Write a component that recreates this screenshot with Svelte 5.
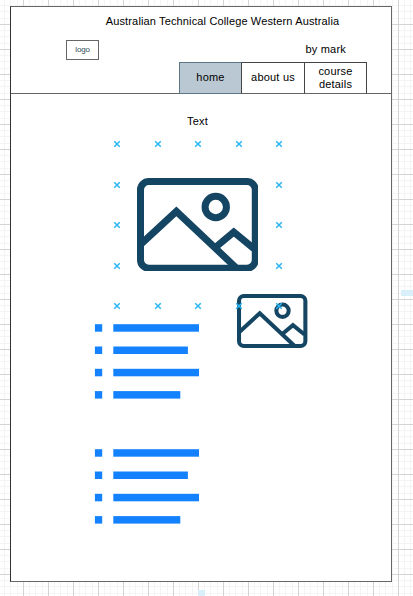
<script>
  const tabs = [
    { label: 'home', active: true },
    { label: 'about us' },
    { label: 'course details' }
  ];
  const bars = [85.7, 74.6, 85.7, 67];
  const xs = [117, 158, 198, 239, 279];
  const ys = [144, 185, 225, 266, 306];
  const points = ys.flatMap((y, row) =>
    xs.filter((x, col) => row === 0 || row === 4 || col === 0 || col === 4).map((x) => ({ x, y }))
  );
</script>

{#snippet picture(kind)}
  <svg class="picture {kind}" viewBox="0 0 365 281" preserveAspectRatio="none">
    <g fill="none" stroke="#144563" stroke-width="21">
      <rect x="10.5" y="10.5" width="344" height="260" rx="25" />
      <circle cx="236" cy="87" r="32" />
      <path d="M11 199 L118 100 L296 268 M235 208 L290 162 L350 211" />
    </g>
  </svg>
{/snippet}

{#snippet list()}
  <svg class="list" width="106" height="76" viewBox="0 0 106 76">
    {#each bars as w, i}
      <rect x="0.9" y={0.2 + i * 22.3} width="7.3" height="7.5" fill="#1482ff" />
      <rect x="19.3" y={0.2 + i * 22.3} width={w} height="7.5" fill="#1482ff" />
    {/each}
  </svg>
{/snippet}

<div class="canvas">
  <section class="page">
    <header>
      <h1>Australian Technical College Western Australia</h1>
      <div class="brand">
        <div class="logo">logo</div>
        <div class="author">by mark</div>
      </div>
      <nav>
        {#each tabs as tab}
          <div class="tab" class:active={tab.active}><span>{tab.label}</span></div>
        {/each}
      </nav>
    </header>
    <main>
      <div class="caption">Text</div>
      {@render picture('large')}
      <div class="row">
        {@render list()}
        {@render picture('small')}
      </div>
      {@render list()}
    </main>
  </section>
  <svg class="overlay" width="413" height="596" viewBox="0 0 413 596">
    {#each points as p}
      <path
        d="M{p.x - 2.8} {p.y - 2.8} l5.6 5.6 m0 -5.6 l-5.6 5.6"
        stroke="#29b6f2"
        stroke-width="1.5"
        fill="none"
      />
    {/each}
    <path d="M401 290h12v6h-12z M198 590h7v6h-7z" fill="#d9f0fb" />
  </svg>
</div>

<style>
  :global(body) {
    margin: 0;
    background: #fff;
  }
  .canvas {
    position: relative;
    box-sizing: border-box;
    width: 413px;
    height: 596px;
    padding: 6px 0 0 10px;
    overflow: hidden;
    font-family: 'Liberation Sans', Arial, sans-serif;
    font-size: 11px;
    color: #000;
    background-image:
      linear-gradient(90deg, #d4d4d4 1px, transparent 1px),
      linear-gradient(#d4d4d4 1px, transparent 1px),
      linear-gradient(90deg, transparent 6px, #f4f4f4 6px 7px, transparent 7px 12px, #f4f4f4 12px 13px, transparent 13px 19px, #f4f4f4 19px 20px, transparent 20px),
      linear-gradient(transparent 6px, #f4f4f4 6px 7px, transparent 7px 12px, #f4f4f4 12px 13px, transparent 13px 19px, #f4f4f4 19px 20px, transparent 20px);
    background-size: 25px 25px;
    background-position: 23px 24px;
  }
  .page {
    box-sizing: border-box;
    width: 382px;
    height: 576px;
    border: 1px solid #666;
    border-left-color: #333;
    background: #fff;
  }
  header {
    height: 86px;
    border-bottom: 1px solid #666;
  }
  h1 {
    margin: 0;
    padding: 8px 0 0 43px;
    font-size: 11px;
    line-height: 13px;
    font-weight: 400;
    text-align: center;
    white-space: nowrap;
    letter-spacing: 0.14px;
  }
  .brand {
    display: flex;
    justify-content: space-between;
    height: 22px;
    padding: 12px 45px 0 55px;
  }
  .logo {
    box-sizing: border-box;
    width: 33px;
    height: 20px;
    border: 1px solid #666;
    font-size: 8px;
    line-height: 18px;
    text-align: center;
    letter-spacing: -0.2px;
    color: #2f4a58;
  }
  .author {
    line-height: 13px;
    padding-top: 3px;
    letter-spacing: 0.2px;
  }
  nav {
    display: flex;
    margin-left: 168px;
  }
  .tab {
    box-sizing: border-box;
    display: flex;
    align-items: center;
    justify-content: center;
    width: 63px;
    height: 32px;
    padding-bottom: 1px;
    border: 1px solid #444;
    border-bottom-color: #666;
    background: #fff;
    line-height: 13px;
    text-align: center;
    letter-spacing: 0.2px;
  }
  .tab + .tab {
    border-left: 0;
  }
  .tab:last-child {
    width: 62px;
    padding: 0 8px;
  }
  .tab.active {
    background: #bac8d3;
    border-color: #5d7787;
    border-right-color: #444;
  }
  main {
    display: flex;
    flex-direction: column;
  }
  .caption {
    padding: 21px 0 0 176px;
    line-height: 13px;
    letter-spacing: 0.2px;
  }
  .picture {
    display: block;
    flex: none;
  }
  .large {
    width: 121.8px;
    height: 93.8px;
    margin: 49.6px 0 0 125.6px;
  }
  .row {
    display: flex;
    align-items: flex-start;
    height: 154.8px;
    margin-top: 22.8px;
  }
  .row .list {
    margin-top: 29.8px;
  }
  .list {
    display: block;
    flex: none;
    margin-left: 83px;
  }
  .small {
    width: 70.4px;
    height: 54px;
    margin-left: 37.3px;
  }
  .overlay {
    position: absolute;
    inset: 0;
  }
</style>
